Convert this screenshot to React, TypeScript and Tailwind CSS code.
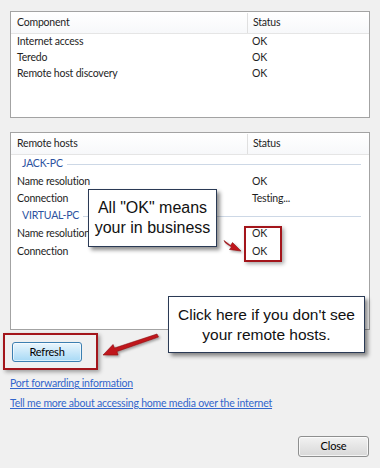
import React from "react";

const ui = "font-['Lato','Noto_Sans',sans-serif] text-[10.5px] tracking-[-0.2px] text-[#1e1e1e]";

function Row({ a, b, h = "h-[16px]" }: { a: string; b: string; h?: string }) {
  return (
    <div className={`flex items-center ${h}`}>
      <div className="w-[236px] pl-[6px]">{a}</div>
      <div className="pl-[5px]">{b}</div>
    </div>
  );
}

function Group({ name }: { name: string }) {
  return (
    <div className="flex h-[18px] items-center pl-[11px] pr-[8px]">
      <span className="text-[#2c52a0]">{name}</span>
      <div className="ml-[4px] h-px flex-1 bg-[#cdd8e6]" />
    </div>
  );
}

function Header({ a }: { a: string }) {
  return (
    <div className="flex h-[21px] items-center border-b border-[#e5e5e5] bg-gradient-to-b from-white to-[#f7f8fa]">
      <div className="flex h-full w-[237px] items-center border-r border-[#e0e0e0] pl-[6px]">{a}</div>
      <div className="pl-[5px]">Status</div>
    </div>
  );
}

export default function App() {
  return (
    <div className={`relative h-[468px] w-[380px] overflow-hidden bg-[#f0f0f0] ${ui}`}>
      <div className="flex flex-col px-[10px] pt-[11px]">
        <div className="h-[107px] border border-[#a3a3a3] bg-white">
          <div className="pt-[1px]">
            <Header a="Component" />
          </div>
          <div>
            <Row a="Internet access" b="OK" />
            <Row a="Teredo" b="OK" />
            <Row a="Remote host discovery" b="OK" />
          </div>
        </div>
        <div className="mt-[14px] h-[198px] border border-[#a3a3a3] bg-white">
          <div className="pt-[1px]">
            <Header a="Remote hosts" />
          </div>
          <Group name="JACK-PC" />
          <Row a="Name resolution" b="OK" h="h-[18px]" />
          <Row a="Connection" b="Testing..." h="h-[16px]" />
          <Group name="VIRTUAL-PC" />
          <Row a="Name resolution" b="OK" h="h-[18px]" />
          <Row a="Connection" b="OK" h="h-[18px]" />
        </div>
        <div className="mt-[12px] flex">
          <button className="ml-[2px] h-[20px] w-[70px] rounded-[3px] border border-[#3c7fb1] bg-gradient-to-b from-[#eaf6fd] to-[#a7d9f5] text-[11px] text-black shadow-[inset_0_0_0_1px_rgba(255,255,255,0.6)]">
            Refresh
          </button>
        </div>
        <div className="mt-[14px] flex flex-col gap-[4px]">
          <span className="self-start text-[#3366cc] underline">Port forwarding information</span>
          <span className="self-start text-[#3366cc] underline">Tell me more about accessing home media over the internet</span>
        </div>
        <div className="mt-[24px] flex justify-end">
          <button className="mr-[1px] h-[21px] w-[71px] rounded-[3px] border border-[#8e8f8f] bg-gradient-to-b from-[#f2f2f2] to-[#d8d8d8] text-[11px] text-black shadow-[inset_0_0_0_1px_rgba(255,255,255,0.7)]">
            Close
          </button>
        </div>
      </div>

      {/* Red highlight boxes */}
      <div className="absolute left-[3px] top-[333px] h-[37px] w-[95px] border-2 border-[#a3151b] shadow-[2px_2px_4px_rgba(0,0,0,0.35)]" />
      <div className="absolute left-[244px] top-[226px] h-[36px] w-[38px] border-2 border-[#a3151b] shadow-[2px_2px_4px_rgba(0,0,0,0.35)]" />

      {/* Callout 1 */}
      <div className="absolute left-[88px] top-[189px] flex h-[58px] w-[129px] flex-col items-center justify-center border border-[#2a3a55] bg-white font-['Liberation_Sans',Arial,sans-serif] text-[16px] leading-[20px] tracking-normal text-[#111] shadow-[3px_3px_4px_rgba(0,0,0,0.45)]">
        <div>All "OK" means</div>
        <div>your in business</div>
      </div>

      {/* Callout 2 */}
      <div className="absolute left-[168px] top-[296px] flex h-[57px] w-[197px] flex-col items-center justify-center border border-[#2a3a55] bg-white font-['Liberation_Sans',Arial,sans-serif] text-[15.5px] leading-[20px] tracking-normal text-[#111] shadow-[3px_3px_4px_rgba(0,0,0,0.45)]">
        <div>Click here if you don't see</div>
        <div>your remote hosts.</div>
      </div>

      {/* Arrows */}
      <svg className="absolute left-0 top-0" width="380" height="468" viewBox="0 0 380 468">
        <defs>
          <filter id="sh" x="-50%" y="-50%" width="200%" height="200%">
            <feDropShadow dx="1.5" dy="1.5" stdDeviation="1" floodColor="#000" floodOpacity="0.35" />
          </filter>
        </defs>
        <g filter="url(#sh)" fill="#c0141b" stroke="#8a0f12" strokeWidth="0.6">
          <polygon points="224,240.5 230.5,245.5 232.5,242.5 241,251 229.5,249.5 231.5,247 225.5,243" />
          <polygon points="157,334 158.5,337 117,351.5 118,355 103,355 113,344.5 114.5,348" />
        </g>
      </svg>
    </div>
  );
}
